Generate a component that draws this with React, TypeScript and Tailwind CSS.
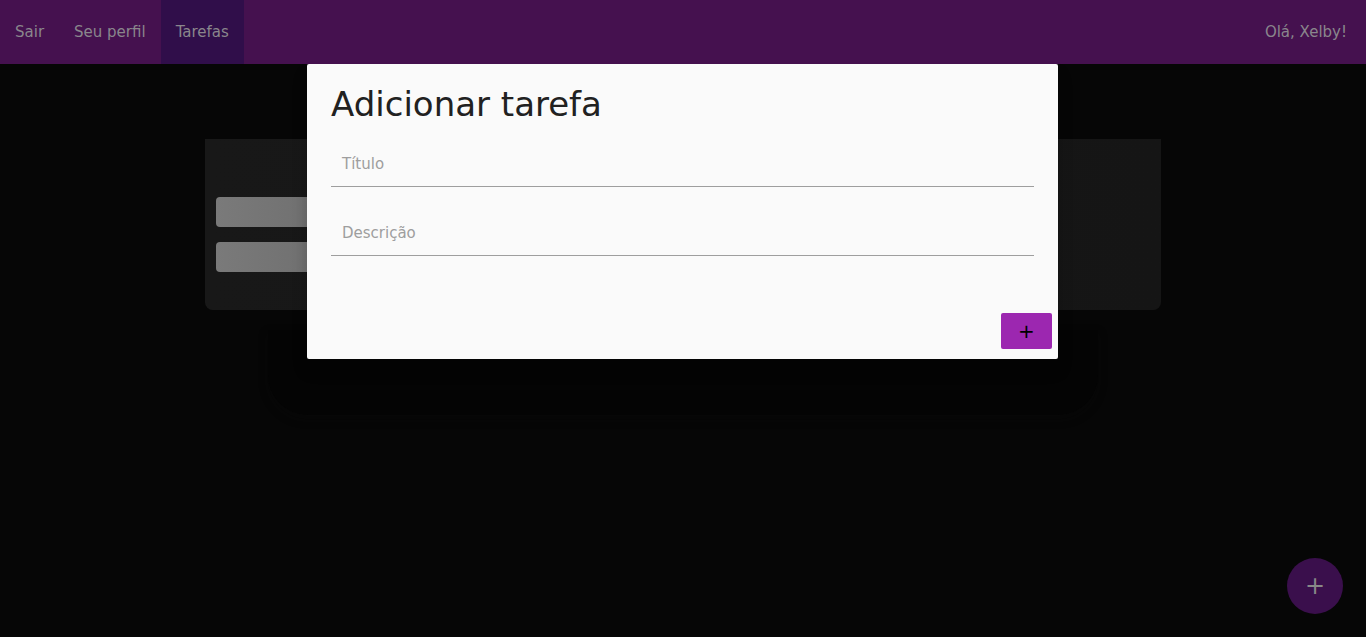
import React from "react";

const font = { fontFamily: '"DejaVu Sans", "Liberation Sans", sans-serif' };

const NavItem = ({ label, active = false }: { label: string; active?: boolean }) => (
  <div
    className={`flex h-full items-center px-[15px] text-[15px] text-[#8a868c] ${
      active ? "bg-[#300e4a]" : ""
    }`}
  >
    {label}
  </div>
);

const Field = ({ label }: { label: string }) => (
  <div className="flex h-[46px] items-center border-b border-[#9e9e9e] px-[11px] pt-[2px] text-[15px] text-[#9e9e9e]">
    {label}
  </div>
);

export default function App() {
  return (
    <div className="relative h-[637px] w-full overflow-hidden bg-[#060606]" style={font}>
      {/* top bar */}
      <nav className="flex h-[64px] w-full items-stretch justify-between bg-[#45114f]">
        <div className="flex h-full">
          <NavItem label="Sair" />
          <NavItem label="Seu perfil" />
          <NavItem label="Tarefas" active />
        </div>
        <div className="flex h-full items-center pr-[19px] text-[15px] text-[#8a868c]">Olá, Xelby!</div>
      </nav>

      {/* page content behind the dialog */}
      <main className="flex flex-col items-center pt-[75px]">
        <section className="h-[171px] w-[956px] rounded-b-[8px] bg-gradient-to-r from-[#181818] to-[#151515] px-[11px] pt-[58px]">
          <div className="flex flex-col gap-[15px]">
            <div className="h-[30px] w-[500px] rounded-[4px] bg-gradient-to-r from-[#7a7a7a] to-[#4a4a4a]" />
            <div className="h-[30px] w-[500px] rounded-[4px] bg-gradient-to-r from-[#7a7a7a] to-[#4a4a4a]" />
          </div>
        </section>
        <div className="mt-[20px] h-[85px] w-[830px] rounded-b-[40px] bg-[#040404] shadow-[0_4px_10px_rgba(10,10,10,0.4)]" />
      </main>

      {/* dialog */}
      <div className="absolute left-[307px] top-[64px] w-[751px] rounded-[2px] bg-[#fafafa] shadow-[0_11px_15px_rgba(0,0,0,0.2)]">
        <div className="px-6 pt-[19px]">
          <h2 className="h-[43px] text-[34px] leading-[43px] text-[#212121]">Adicionar tarefa</h2>
          <div className="mt-[15px]">
            <Field label="Título" />
          </div>
          <div className="mt-[23px]">
            <Field label="Descrição" />
          </div>
        </div>
        <div className="mt-[57px] flex justify-end pb-[10px] pr-[6px]">
          <button className="flex h-[36px] w-[51px] items-center justify-center rounded-[2px] bg-[#9c27b0] text-[20px] text-black">
            +
          </button>
        </div>
      </div>

      {/* floating action button */}
      <button className="absolute bottom-[23px] right-[23px] flex h-[56px] w-[56px] items-center justify-center rounded-full bg-[#3a0f4c] text-[24px] text-[#888888]">
        +
      </button>
    </div>
  );
}
